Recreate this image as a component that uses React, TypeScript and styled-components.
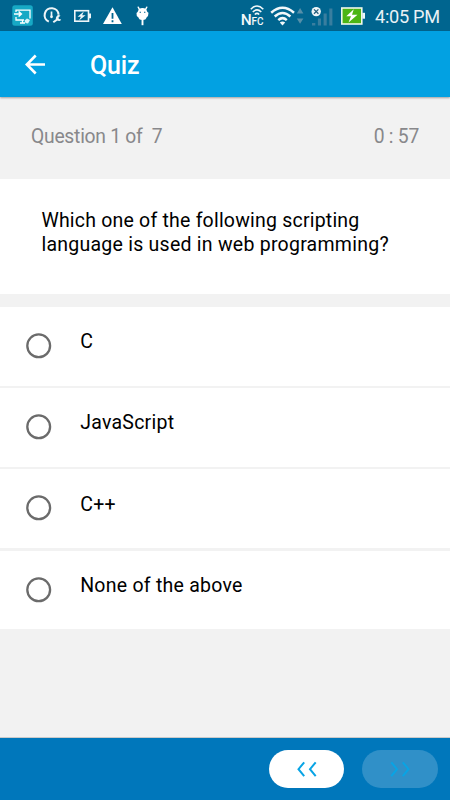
import React from 'react';
import styled, { createGlobalStyle } from 'styled-components';

const GlobalStyle = createGlobalStyle`
  * { box-sizing: border-box; }
  body { margin: 0; background: #f2f2f2; }
`;

const Screen = styled.div`
  width: 450px;
  height: 800px;
  display: flex;
  flex-direction: column;
  overflow: hidden;
  background: #f2f2f2;
  color: #000;
  font-family: Roboto, 'Liberation Sans', sans-serif;
`;

const StatusBar = styled.header`
  height: 31px;
  flex: none;
  display: flex;
  justify-content: space-between;
  background: #00658f;
  color: #fff;
`;

const StatusGroup = styled.div`
  display: flex;
`;

const Clock = styled.time`
  width: 75px;
  font-size: 18.2px;
  line-height: 33px;
  letter-spacing: -0.3px;
  color: #e9f1f5;
  white-space: nowrap;
`;

const AppBar = styled.nav`
  height: 66.4px;
  flex: none;
  display: flex;
  align-items: center;
  padding: 2px 0 0 25px;
  background: #02a1e2;
  box-shadow: 0 1px 2px rgba(0, 0, 0, 0.35);
  z-index: 1;
`;

const BackButton = styled.button`
  width: 65px;
  height: 40px;
  padding: 0;
  border: 0;
  background: none;
  display: flex;
  align-items: center;
`;

const Title = styled.h1`
  margin: 2px 0 0;
  color: #fff;
  font-size: 25px;
  font-weight: 500;
  line-height: 30px;
  letter-spacing: -0.2px;
`;

const Progress = styled.div`
  height: 81.6px;
  flex: none;
  display: flex;
  justify-content: space-between;
  padding: 28px 31px 0;
  color: #88888b;
  font-size: 19.3px;
  line-height: 24px;
  letter-spacing: -0.25px;
  white-space: pre;
`;

const Question = styled.section`
  height: 115px;
  flex: none;
  padding: 30px 0 0 41.4px;
  background: #fff;
  font-size: 19.5px;
  line-height: 24px;
`;

const QuestionLine = styled.div<{ $spacing: number }>`
  letter-spacing: ${(p) => p.$spacing}px;
  white-space: nowrap;
`;

const Options = styled.ul`
  flex: none;
  display: flex;
  flex-direction: column;
  gap: 2.5px;
  margin: 13px 0 0;
  padding: 0;
  list-style: none;
`;

const Option = styled.li`
  height: 78.7px;
  display: flex;
  padding-left: 25px;
  background: #fff;
`;

const RadioIcon = styled.svg`
  width: 28px;
  height: 28px;
  margin: 25px 27.2px 0 0;
  flex: none;
`;

const OptionText = styled.span`
  padding-top: 23.2px;
  font-size: 19.5px;
  line-height: 24px;
  letter-spacing: 0.25px;
`;

const Footer = styled.footer`
  height: 62px;
  flex: none;
  display: flex;
  justify-content: flex-end;
  gap: 18.3px;
  margin-top: auto;
  padding: 12px 12.4px 0 0;
  background: #0077bb;
  box-shadow: 0 -1px 0 #cacaca;
`;

const PageButton = styled.button<{ $off?: boolean }>`
  width: 75.3px;
  height: 37.8px;
  padding: 0;
  border: 0;
  border-radius: 19px;
  background: ${(p) => (p.$off ? '#3090c8' : '#fff')};
  display: flex;
`;

function LeftStatusIcons() {
  return (
    <svg width="160" height="31" viewBox="0 0 160 31" fill="none">
      <rect x="12.3" y="5.3" width="20.5" height="20.5" rx="2.5" fill="#17a9c5" />
      <path d="M16 12V10.2H30V18.5M16 17V20H24M20 23H25M22.5 20V23" stroke="#fff" strokeWidth="1.3" />
      <path d="M14 14H21M18.6 11.5 21.3 14 18.6 16.5" stroke="#fff" strokeWidth="1.6" />
      <path d="M24.5 20.5 27 18.5 30 20 28 23.5 25.5 23Z" fill="#d8f5fa" />
      <path d="M48.8 21.6A7 7 0 1 1 58.6 14.7" stroke="#eef5f8" strokeWidth="2.1" />
      <path d="M51.5 11.5V16" stroke="#eef5f8" strokeWidth="1.7" />
      <circle cx="51.5" cy="16.8" r="1.4" fill="#eef5f8" />
      <path d="M53.3 22.3 58 18.9" stroke="#eef5f8" strokeWidth="2" />
      <path d="M60.5 15.8A2.8 2.8 0 1 0 61.2 19.4L58.8 18.9 58.6 17.2Z" fill="#eef5f8" />
      <rect x="74.8" y="10.7" width="13.7" height="10.5" stroke="#eef5f8" strokeWidth="1.6" />
      <path d="M90 13.5V18.3" stroke="#eef5f8" strokeWidth="2" />
      <path d="M83.8 11.6 77.6 16.7 80.9 16.7 79 20.6 85.6 15.2 82.2 15.2Z" fill="#eef5f8" />
      <path d="M112.5 7.2 121.8 24H103Z" fill="#fff" />
      <path d="M112.5 13V18.8M112.5 20.3V22.2" stroke="#00658f" strokeWidth="1.8" />
      <path d="M138.2 7.2 139.4 9.3M146.8 7.2 145.6 9.3" stroke="#fff" strokeWidth="1.4" strokeLinecap="round" />
      <path d="M139 9Q142.5 6.8 146 9L147.4 12 148.5 12.7 148 16 146.5 17.5Q146 20 142.5 20Q139 20 138.5 17.5L136.8 16 136.5 13 137.6 12Z" fill="#fff" />
      <path d="M142.5 19V25.2" stroke="#fff" strokeWidth="1.9" />
      <path d="M139.6 12.2H141M144 12.2H145.4" stroke="#00658f" strokeWidth="1.1" />
    </svg>
  );
}

function RightStatusIcons() {
  return (
    <svg width="135" height="31" viewBox="240 0 135 31" fill="none">
      <text x="240.8" y="25" fill="#f2f8fa" fontFamily="Roboto, sans-serif" fontSize="15.5" fontWeight="500">N</text>
      <text x="251.6" y="25" fill="#f2f8fa" fontFamily="Roboto, sans-serif" fontSize="10.8" fontWeight="500" textLength="12" lengthAdjust="spacingAndGlyphs">FC</text>
      <path d="M250.8 9.2Q257 2.7 263.3 9.2M252.8 12Q257 7.7 261.3 12M254.8 14.5Q257 12.3 259.2 14.5" stroke="#f2f8fa" strokeWidth="1.6" />
      <path d="M271.2 12.8Q282.5 2.8 294 12.8M274.7 16.5Q282.5 9.5 290.4 16.5M278.3 20.1Q282.5 16.2 286.8 20.1" stroke="#f2f8fa" strokeWidth="2.5" />
      <path d="M279.8 22.6Q282.5 20.2 285.2 22.6L282.5 25.5Z" fill="#f2f8fa" />
      <path d="M296.8 13.5 300.1 8 303.4 13.5ZM296.8 18.4H303.4L300.1 23.7Z" fill="#558fa9" />
      <path d="M312 23H315.3V25.5H312ZM317.9 18.5H321V25.5H317.9ZM323.6 13.5H326.7V25.5H323.6ZM329.3 8.4H332.4V25.5H329.3Z" fill="#397e9f" />
      <circle cx="316.2" cy="11.6" r="4.7" fill="#eef5f8" />
      <path d="M314 9.4 318.4 13.8M318.4 9.4 314 13.8" stroke="#235e7c" strokeWidth="1.3" />
      <rect x="341.8" y="8" width="20" height="16" fill="#4cb514" stroke="#eff8e9" strokeWidth="1.6" />
      <path d="M362.3 12.8H365V18.7H362.3Z" fill="#eef5f8" />
      <path d="M353.8 9.2 346.3 16.3H351L348.5 22.5 357.5 14.7H352Z" fill="#fff" />
    </svg>
  );
}

function BackArrow() {
  return (
    <svg width="22" height="22" viewBox="0 0 22 22" fill="none" stroke="#fff" strokeWidth="2.6">
      <path d="M20 10.5H2M10.7 1.5 1.8 10.5 10.7 19.5" />
    </svg>
  );
}

function Radio() {
  return (
    <RadioIcon viewBox="0 0 28 28" fill="none">
      <circle cx="13.7" cy="13.8" r="11.4" stroke="#6b6b6b" strokeWidth="2.3" />
    </RadioIcon>
  );
}

function Chevrons({ forward }: { forward?: boolean }) {
  return (
    <svg width="75.3" height="38" viewBox="0 0 75.3 38" fill="none" stroke="#08a4e5" strokeWidth="2">
      <path
        d={
          forward
            ? 'M29.3 12.3 35 19.2 29.3 26.1M40.8 12.3 46.5 19.2 40.8 26.1'
            : 'M35.2 12.3 29.5 19.2 35.2 26.1M46.7 12.3 41 19.2 46.7 26.1'
        }
      />
    </svg>
  );
}

const answers = ['C', 'JavaScript', 'C++', 'None of the above'];

export default function App() {
  return (
    <>
      <GlobalStyle />
      <Screen>
        <StatusBar>
          <LeftStatusIcons />
          <StatusGroup>
            <RightStatusIcons />
            <Clock>4:05 PM</Clock>
          </StatusGroup>
        </StatusBar>
        <AppBar>
          <BackButton aria-label="Back"><BackArrow /></BackButton>
          <Title>Quiz</Title>
        </AppBar>
        <Progress>
          <span>{'Question 1 of  7'}</span>
          <span>0 : 57</span>
        </Progress>
        <Question>
          <QuestionLine $spacing={0.21}>Which one of the following scripting</QuestionLine>
          <QuestionLine $spacing={0.25}>language is used in web programming?</QuestionLine>
        </Question>
        <Options>
          {answers.map((answer) => (
            <Option key={answer}>
              <Radio />
              <OptionText>{answer}</OptionText>
            </Option>
          ))}
        </Options>
        <Footer>
          <PageButton aria-label="Previous"><Chevrons /></PageButton>
          <PageButton $off disabled aria-label="Next"><Chevrons forward /></PageButton>
        </Footer>
      </Screen>
    </>
  );
}
